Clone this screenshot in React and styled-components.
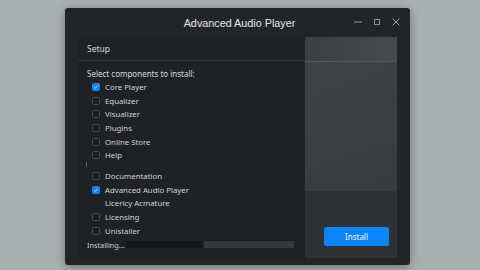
import React from 'react'
import styled, { createGlobalStyle } from 'styled-components'

const GlobalStyle = createGlobalStyle`
  html, body {
    margin: 0;
    padding: 0;
    background: #a9b0b3;
    font-family: "Noto Sans", "Liberation Sans", sans-serif;
  }
`

const items = [
  { label: 'Core Player', checked: true },
  { label: 'Equalizer' },
  { label: 'Visualizer' },
  { label: 'Plugins' },
  { label: 'Online Store' },
  { label: 'Help' },
  { label: '', gap: true },
  { label: 'Documentation' },
  { label: 'Advanced Audio Player', checked: true },
  { label: 'Licericy Acmature', noBox: true },
  { label: 'Licensing' },
  { label: 'Unistaller' },
]

function App() {
  return (
    <Page>
      <GlobalStyle />
      <Window>
        <TitleBar>
          <Title>Advanced Audio Player</Title>
          <Controls>
            <svg width="10" height="10" viewBox="0 0 10 10">
              <line x1="1" y1="5" x2="9" y2="5" stroke="#8a9094" strokeWidth="1" />
            </svg>
            <svg width="10" height="10" viewBox="0 0 10 10">
              <rect x="2.5" y="2.5" width="5" height="5" fill="none" stroke="#8a9094" strokeWidth="1" />
            </svg>
            <svg width="10" height="10" viewBox="0 0 10 10">
              <path d="M1.5 1.5 L8.5 8.5 M8.5 1.5 L1.5 8.5" stroke="#9aa0a4" strokeWidth="1" />
            </svg>
          </Controls>
        </TitleBar>
        <Body>
          <LeftPanel>
            <PanelHeader>Setup</PanelHeader>
            <PanelContent>
              <Heading>Select components to install:</Heading>
              <List>
                {items.map((it, i) =>
                  it.gap ? (
                    <GapRow key={i}><Tick /></GapRow>
                  ) : (
                    <Row key={i}>
                      <Box $checked={it.checked} $hidden={it.noBox}>
                        {it.checked && (
                          <svg width="8" height="8" viewBox="0 0 8 8">
                            <path d="M1.6 4.2 L3.2 5.8 L6.4 2" fill="none" stroke="#fff" strokeWidth="0.9" />
                          </svg>
                        )}
                      </Box>
                      <Label>{it.label}</Label>
                    </Row>
                  )
                )}
              </List>
              <Progress>
                <ProgressText>Installing...</ProgressText>
                <Bar>
                  <BarFill />
                  <BarRest />
                </Bar>
              </Progress>
            </PanelContent>
          </LeftPanel>
          <RightPanel>
            <SideTop />
            <SideMid />
            <SideBottom>
              <InstallButton>Install</InstallButton>
            </SideBottom>
          </RightPanel>
        </Body>
      </Window>
    </Page>
  )
}

export default App

const Page = styled.div`
  width: 480px;
  height: 270px;
  padding: 8px 0 0 65px;
  box-sizing: border-box;
`

const Window = styled.div`
  width: 345px;
  height: 257px;
  background: #212528;
  border-radius: 3px;
  box-shadow: 0 2px 10px rgba(0, 0, 0, 0.35);
  display: flex;
  flex-direction: column;
`

const TitleBar = styled.div`
  height: 29px;
  position: relative;
  display: flex;
  align-items: center;
  justify-content: center;
`

const Title = styled.div`
  color: #e6e8ea;
  font-family: "Liberation Sans", "Noto Sans", sans-serif;
  font-size: 10.8px;
  padding-top: 1px;
  padding-left: 4px;
`

const Controls = styled.div`
  position: absolute;
  right: 9px;
  top: 9px;
  display: flex;
  gap: 9px;
`

const Body = styled.div`
  flex: 1;
  display: flex;
  padding: 0 13px 7px 13px;
`

const LeftPanel = styled.div`
  width: 227px;
  background: #1e2225;
  display: flex;
  flex-direction: column;
`

const PanelHeader = styled.div`
  height: 23px;
  border-bottom: 1px solid #2e3337;
  color: #d8dbdd;
  font-size: 8.5px;
  display: flex;
  align-items: center;
  padding-left: 9px;
`

const PanelContent = styled.div`
  padding: 6px 0 0 9px;
  display: flex;
  flex-direction: column;
`

const Heading = styled.div`
  color: #d6d9db;
  font-size: 8px;
  height: 13px;
  line-height: 13px;
`

const List = styled.div`
  display: flex;
  flex-direction: column;
  padding-left: 5px;
`

const Row = styled.div`
  height: 13.7px;
  display: flex;
  align-items: center;
  gap: 5px;
`

const GapRow = styled.div`
  height: 7px;
  margin-left: -6px;
  display: flex;
  align-items: flex-start;
`

const Tick = styled.div`
  width: 1px;
  height: 5px;
  background: #5c6266;
`

const Box = styled.div`
  width: 8px;
  height: 8px;
  box-sizing: border-box;
  border-radius: 1.5px;
  border: 1px solid ${p => (p.$checked ? '#1a7ff0' : '#41474b')};
  background: ${p => (p.$checked ? '#1a7ff0' : '#1b1f22')};
  visibility: ${p => (p.$hidden ? 'hidden' : 'visible')};
  display: flex;
  align-items: center;
  justify-content: center;
`

const Label = styled.span`
  color: #cfd3d5;
  font-size: 7.8px;
`

const Progress = styled.div`
  display: flex;
  align-items: center;
  gap: 4px;
  margin-top: 1px;
  height: 12px;
`

const ProgressText = styled.span`
  color: #cdd1d3;
  font-size: 7.3px;
  width: 35px;
`

const Bar = styled.div`
  display: flex;
  gap: 1px;
  height: 7px;
`

const BarFill = styled.div`
  width: 77px;
  background: #15181a;
`

const BarRest = styled.div`
  width: 90px;
  background: #33383c;
`

const RightPanel = styled.div`
  flex: 1;
  display: flex;
  flex-direction: column;
  background: #2b3034;
`

const SideTop = styled.div`
  height: 24px;
  background: linear-gradient(90deg, #3b4044, #454a4e);
  border-bottom: 1px solid #50565a;
`

const SideMid = styled.div`
  flex: 1;
  background: linear-gradient(160deg, #3f4448, #363b3f);
`

const SideBottom = styled.div`
  height: 55px;
  background: #2d3236;
  display: flex;
  align-items: flex-end;
  justify-content: flex-end;
  padding: 0 8px 12px 0;
`

const InstallButton = styled.button`
  width: 65px;
  height: 19px;
  border: none;
  border-radius: 2.5px;
  background: #0a84ff;
  color: #f2f6fa;
  font-family: "Noto Sans", "Liberation Sans", sans-serif;
  font-size: 8px;
  padding: 0;
`
